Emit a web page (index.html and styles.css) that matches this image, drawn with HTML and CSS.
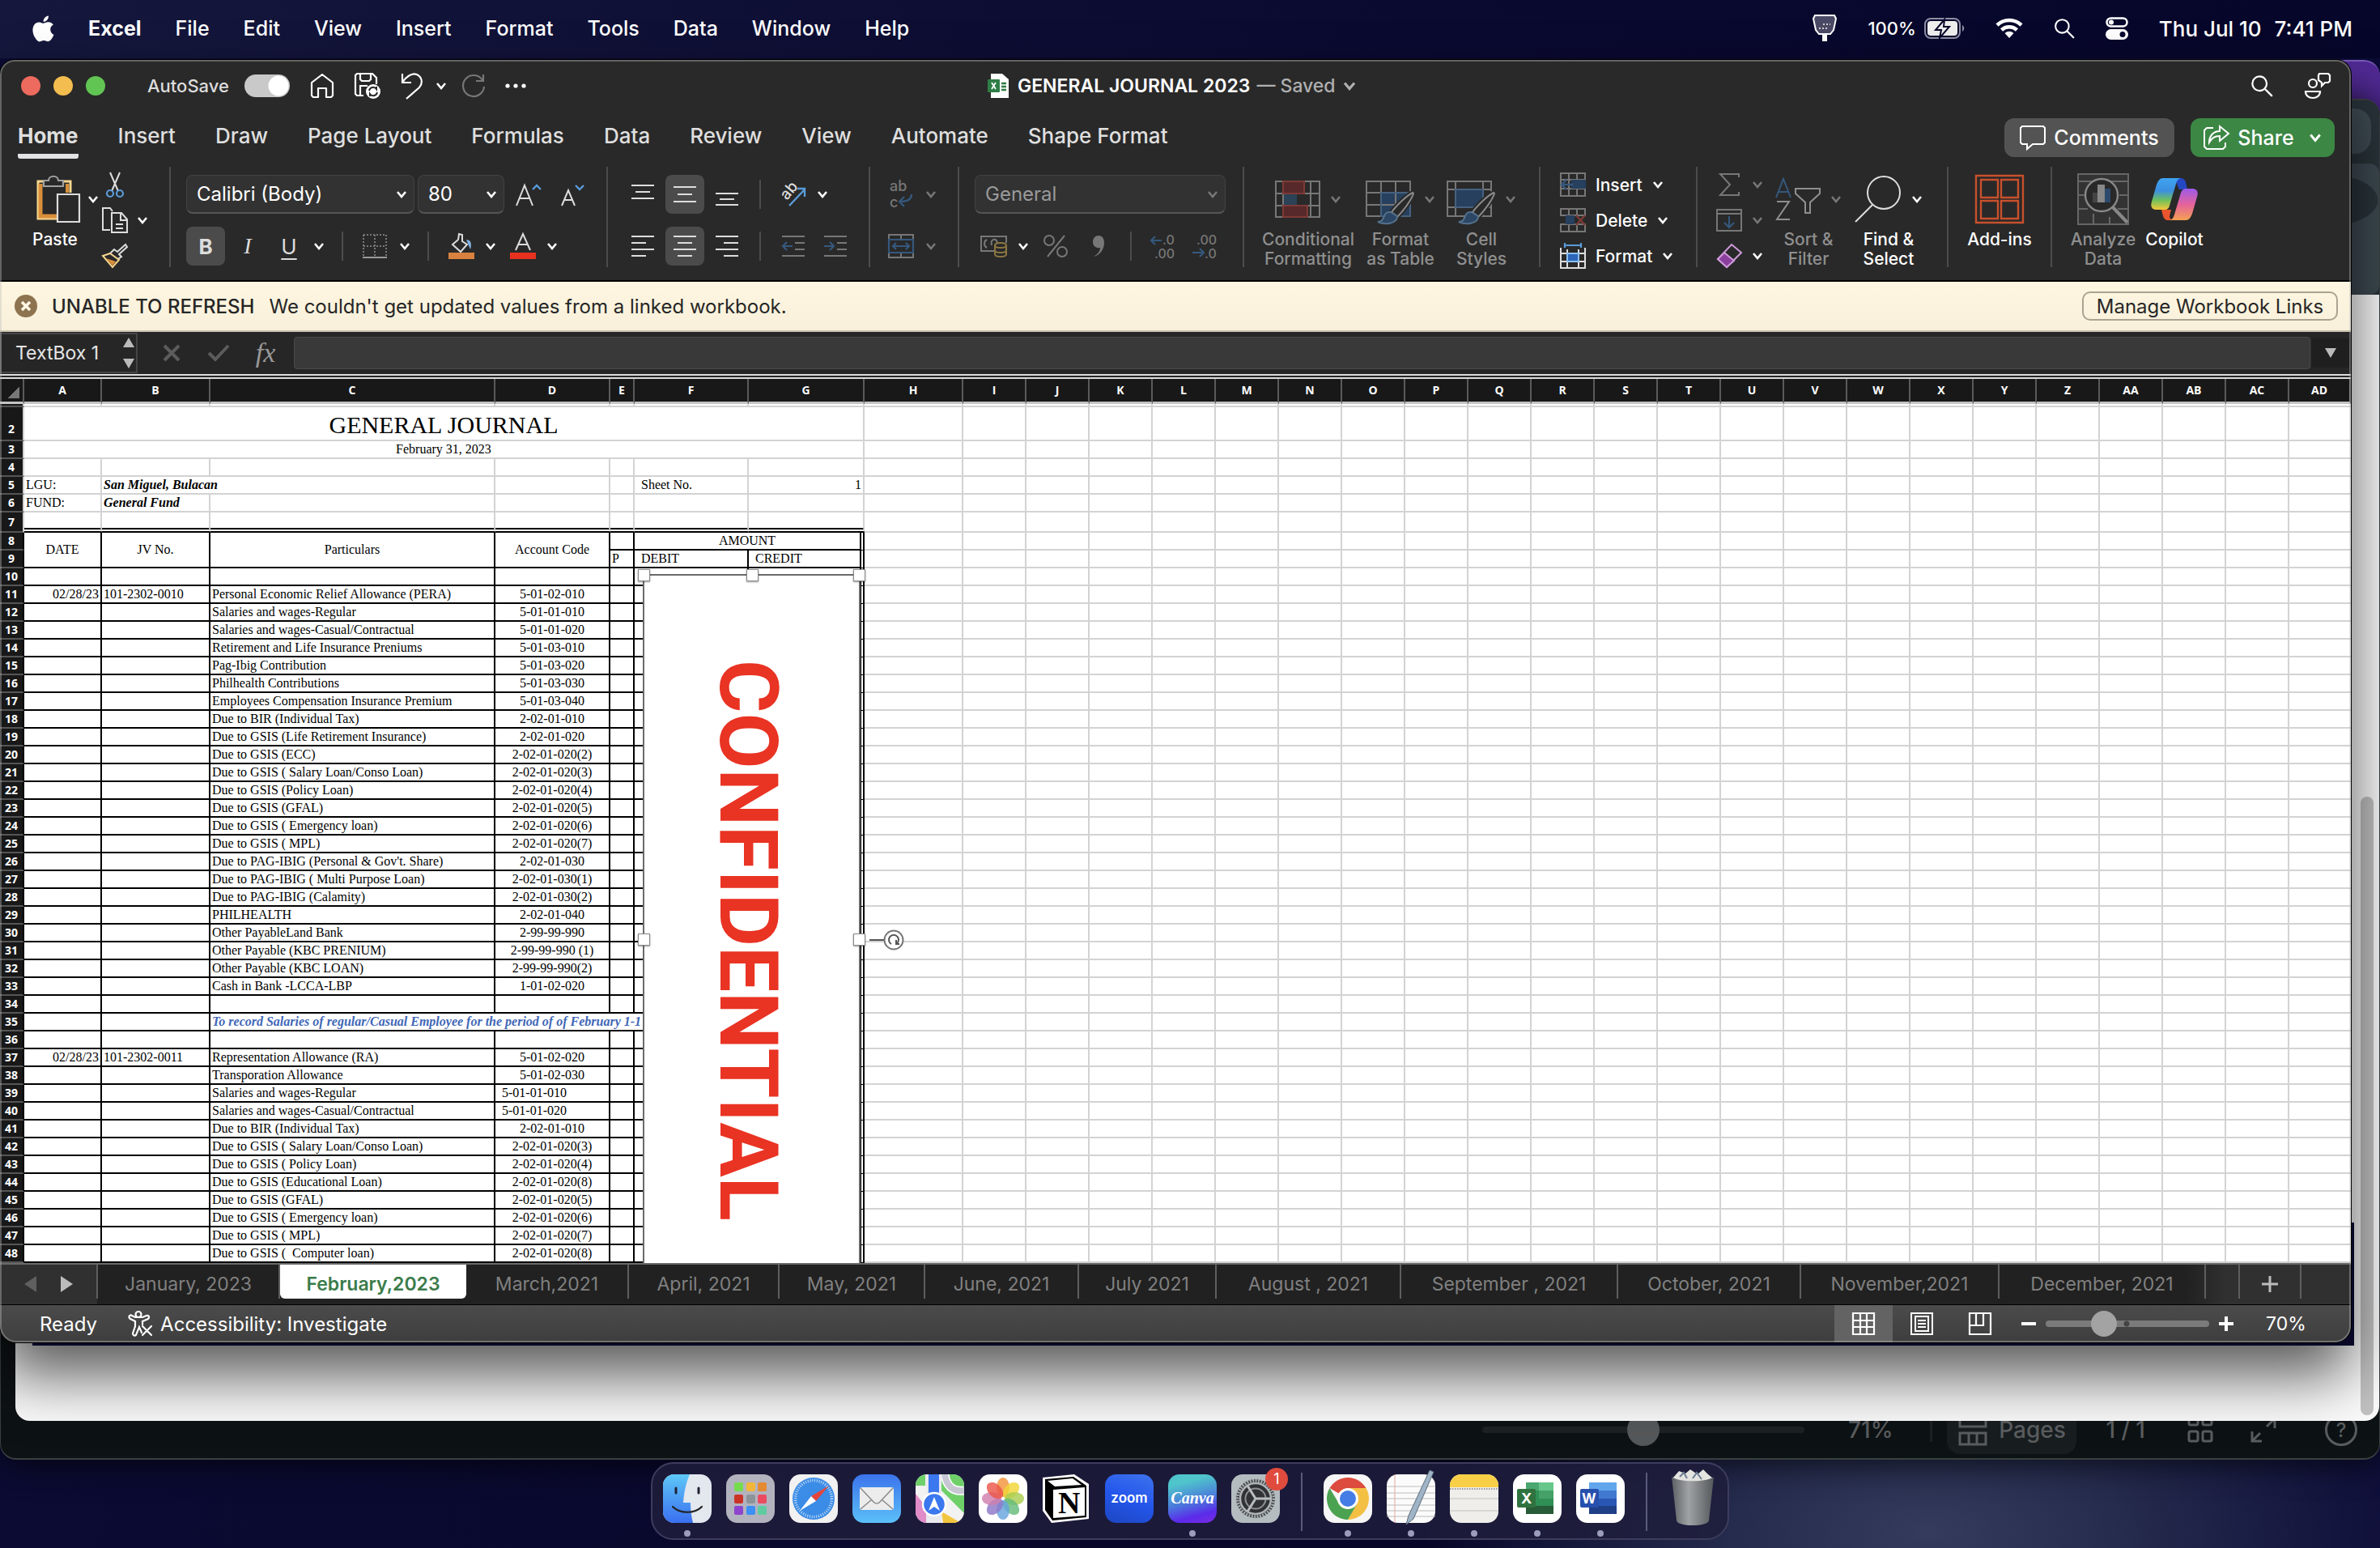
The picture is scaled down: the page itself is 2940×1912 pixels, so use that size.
FILE: index.html
```html
<!DOCTYPE html>
<html lang="en">
<head>
<meta charset="utf-8">
<title>GENERAL JOURNAL 2023</title>
<link rel="stylesheet" href="styles.css">
</head>
<body>
<svg class="defs" aria-hidden="true">
  <symbol id="chev" viewBox="0 0 14 10"><path d="M2 2l5 6 5-6" fill="none" stroke="currentColor" stroke-width="2.6"/></symbol>
  <symbol id="lens" viewBox="0 0 30 30"><circle cx="12" cy="12" r="9.5" fill="none" stroke="currentColor" stroke-width="2.4"/><path d="M19 19l9 9" stroke="currentColor" stroke-width="2.6" stroke-linecap="round"/></symbol>
  <symbol id="al-top" viewBox="0 0 28 28"><path d="M0 3h28M5 11h18M0 19h28" stroke="currentColor" stroke-width="2"/></symbol>
  <symbol id="al-mid" viewBox="0 0 28 28"><path d="M0 5h28M5 14h18M0 23h28" stroke="currentColor" stroke-width="2"/></symbol>
  <symbol id="al-bot" viewBox="0 0 28 28"><path d="M0 13h28M5 20h18M0 27h28" stroke="currentColor" stroke-width="2"/></symbol>
  <symbol id="al-left" viewBox="0 0 28 28"><path d="M0 2h28M0 10h18M0 18h28M0 26h18" stroke="currentColor" stroke-width="2"/></symbol>
  <symbol id="al-center" viewBox="0 0 28 28"><path d="M0 2h28M5 10h18M0 18h28M5 26h18" stroke="currentColor" stroke-width="2"/></symbol>
  <symbol id="al-right" viewBox="0 0 28 28"><path d="M0 2h28M10 10h18M0 18h28M10 26h18" stroke="currentColor" stroke-width="2"/></symbol>
  <symbol id="brush" viewBox="0 0 46 42"><path d="M44 2C36 6 24 18 18 26l7 6C33 24 43 10 45 3z" fill="#292929" stroke="#292929" stroke-width="6"/><path d="M44 2C36 6 24 18 18 26l7 6C33 24 43 10 45 3z" fill="#292929" stroke="#8a8a8a" stroke-width="2"/><path d="M17 26c-8-1-8 6-10 9-1 2-3 3-6 3 8 4 24 3 24-7z" fill="#2c4666" stroke="#54728c" stroke-width="2"/></symbol>
</svg>

<header class="menubar">
  <nav class="menus">
    <svg class="apple" viewBox="0 0 26 32"><path fill="#fff" d="M21.500 17c0-4 3.200-5.600 3.400-5.800-1.900-2.700-4.800-3-5.800-3.100-2.400-.2-4.700 1.400-6 1.400-1.200 0-3.100-1.400-5.100-1.300C5.300 8.200 2.900 9.700 1.600 12c-2.700 4.700-.7 11.700 2 15.500 1.300 1.900 2.800 4 4.900 3.900 2-.1 2.700-1.300 5-1.300s3 1.300 5.100 1.200c2.100 0 3.500-1.900 4.800-3.800 1.500-2.200 2.100-4.300 2.100-4.400-.1 0-4-1.600-4-6.100zM17.600 5.500C18.700 4.200 19.400 2.400 19.200.6c-1.500.1-3.400 1-4.500 2.300-1 1.100-1.900 3-1.600 4.700 1.700.1 3.400-.9 4.500-2.100z"/></svg>
    <a href="#" class="app">Excel</a><a href="#">File</a><a href="#">Edit</a><a href="#">View</a><a href="#">Insert</a><a href="#">Format</a><a href="#">Tools</a><a href="#">Data</a><a href="#">Window</a><a href="#">Help</a>
  </nav>
  <div class="extras">
    <svg width="30" height="34" viewBox="0 0 30 34"><path d="M3 1h24l2 4-3 14-4 5H8l-4-5L1 5z" fill="#4a4a66" stroke="#fff" stroke-width="2"/><path d="M12 24h6v9h-6z" fill="#fff"/><path d="M8 17h12M13 12h9" stroke="#ccc" stroke-width="2" stroke-dasharray="2 2"/></svg>
    <span class="battery"><span>100%</span><svg width="50" height="26" viewBox="0 0 50 26"><rect x="1" y="1" width="43" height="24" rx="7" fill="none" stroke="#8d8da4" stroke-width="2"/><rect x="4" y="4" width="37" height="18" rx="4" fill="#eee"/><path d="M47 9c3 2 3 6 0 8z" fill="#8d8da4"/><path d="M25 2L14 15h7l-2 10 12-14h-7z" fill="#eee" stroke="#07072a" stroke-width="2"/></svg></span>
    <svg width="34" height="26" viewBox="0 0 34 26"><path d="M2 9a22 22 0 0 1 30 0M7.500 15a14 14 0 0 1 19 0" fill="none" stroke="#fff" stroke-width="4.500"/><path d="M17 25l-5.500-6a8 8 0 0 1 11 0z" fill="#fff"/></svg>
    <svg width="26" height="26"><use href="#lens"/></svg>
    <svg width="28" height="28" viewBox="0 0 28 28"><rect x="1.500" y="1.500" width="25" height="10" rx="5" fill="none" stroke="#fff" stroke-width="2.500"/><circle cx="7" cy="6.500" r="3" fill="#fff"/><rect x="0" y="15" width="28" height="13" rx="6.500" fill="#fff"/><circle cx="21" cy="21.500" r="3.500" fill="#0a0a30"/></svg>
    <time class="clock"><span>Thu Jul 10</span><span>7:41 PM</span></time>
  </div>
</header>

<main class="desktop">
  <div class="purple-window"></div>
  <section class="canva">
    <div class="canva-top"><i class="pill"></i><i class="panel"></i></div>
    <div class="canva-page"><i class="scroll"></i></div>
    <footer class="canva-foot">
      <div class="foot-row">
        <div class="track"><i></i></div>
        <span class="pct">71%</span>
        <i class="bar"></i>
        <button class="pages"><svg width="36" height="44" viewBox="0 0 36 44"><path d="M2 2h32v16H2zM2 26h32v14H2zM13 26v14M23 26v14" fill="none" stroke="currentColor" stroke-width="3"/></svg>Pages</button>
        <span class="count">1 / 1</span>
        <svg width="32" height="40" viewBox="0 0 32 40"><g fill="none" stroke="currentColor" stroke-width="3"><rect x="2" y="2" width="11" height="12" rx="2"/><rect x="19" y="2" width="11" height="12" rx="2"/><rect x="2" y="22" width="11" height="12" rx="2"/><rect x="19" y="22" width="11" height="12" rx="2"/></g></svg>
        <svg width="32" height="36" viewBox="0 0 32 36"><path d="M2 20v12h12M2 32l10-10M18 4h12v12M30 4L20 14" fill="none" stroke="currentColor" stroke-width="3"/></svg>
        <span class="help">?</span>
      </div>
    </footer>
  </section>
  <div class="under"></div>

  <section class="excel">
    <div class="titlebar">
      <div class="lights"><i></i><i></i><i></i></div>
      <label class="autosave">AutoSave <input type="checkbox" checked></label>
      <div class="quick">
        <svg width="30" height="32" viewBox="0 0 30 32"><path d="M2 12L15 2l13 10v16l-2 2h-6V19H10v11H4l-2-2z" fill="none" stroke="#fff" stroke-width="2.200" stroke-linejoin="round"/></svg>
        <svg width="34" height="34" viewBox="0 0 34 34"><path d="M12 29H4l-2-2V4l2-2h19l5 5v8M8 2v7l2 2h9l2-2V2M8 29V17h9" fill="none" stroke="#fff" stroke-width="2.200"/><circle cx="24" cy="24" r="9" fill="#fff"/><path d="M19 23a5 5 0 0 1 9-2v-3M29 25a5 5 0 0 1-9 2v3" fill="none" stroke="#292929" stroke-width="2"/></svg>
        <svg width="28" height="34" viewBox="0 0 28 34"><path d="M2 2v11h11M2 13C7 5 14 1 20 3c6 3 8 10 3 16L7 33" fill="none" stroke="#fff" stroke-width="2.200"/></svg>
        <svg class="ch" width="14" height="10"><use href="#chev"/></svg>
        <svg class="dim" width="30" height="32" viewBox="0 0 30 32"><path d="M27 2v8h-9M26 9a13 13 0 1 0 2 8" fill="none" stroke="currentColor" stroke-width="2.200"/></svg>
        <svg width="26" height="6" viewBox="0 0 26 6"><circle cx="3" cy="3" r="2.600" fill="#fff"/><circle cx="13" cy="3" r="2.600" fill="#fff"/><circle cx="23" cy="3" r="2.600" fill="#fff"/></svg>
      </div>
      <h1 class="doc"><svg width="26" height="30" viewBox="0 0 26 30"><path d="M4 0h14l8 7v23H4z" fill="#fff"/><rect x="0" y="7" width="15" height="16" rx="1" fill="#2e7d46"/><path d="M17 12h6M17 16h6M17 20h6" stroke="#2e7d46" stroke-width="2.500"/><path d="M5 11l5 8M10 11l-5 8" stroke="#fff" stroke-width="1.800"/></svg><span>GENERAL JOURNAL 2023</span><em>— Saved</em><svg class="ch" width="18" height="12"><use href="#chev"/></svg></h1>
      <div class="tb-right">
        <svg width="28" height="28" viewBox="0 0 30 30"><use href="#lens"/></svg>
        <svg width="34" height="34" viewBox="0 0 34 34"><g fill="none" stroke="#fff" stroke-width="2.200"><circle cx="11" cy="14" r="5"/><path d="M2 24h18c0 5-4 8-9 8s-9-3-9-8zM19 2h11l2 2v7l-2 2h-4l-4 4v-4l-4-3V4z"/></g></svg>
      </div>
    </div>

    <div class="tabs">
      <nav><a href="#" class="on">Home</a><a href="#">Insert</a><a href="#">Draw</a><a href="#">Page Layout</a><a href="#">Formulas</a><a href="#">Data</a><a href="#">Review</a><a href="#">View</a><a href="#">Automate</a><a href="#">Shape Format</a></nav>
      <button class="comments"><svg width="32" height="30" viewBox="0 0 32 30"><path d="M3 1h26l2 2v18l-2 2H16l-7 6v-6H3l-2-2V3z" fill="none" stroke="#fff" stroke-width="2"/></svg>Comments</button>
      <button class="share"><svg width="32" height="30" viewBox="0 0 32 30"><path d="M12 3H4L1 6v20l3 3h20l3-3v-5M20 7V1l11 9-11 9v-6c-7 0-10 3-13 8 0-8 5-14 13-14z" fill="none" stroke="#fff" stroke-width="2"/></svg>Share<svg class="ch" width="16" height="12"><use href="#chev"/></svg></button>
    </div>

    <div class="ribbon">
      <div class="group clip">
        <button class="big"><span><svg width="54" height="60" viewBox="0 0 54 60"><path d="M10 8H2v46h24M34 8h8v14" fill="none" stroke="#f5d68e" stroke-width="3"/><path d="M5 11v40h20" fill="none" stroke="#d98f3a" stroke-width="5"/><path d="M38 11v11" stroke="#d98f3a" stroke-width="4"/><path d="M9 14V7h6c0-7 12-7 12 0h6v7z" fill="#292929" stroke="#a0a0a0" stroke-width="2.200"/><path d="M26 24h27v34H26z" fill="#292929" stroke="#ddd" stroke-width="2.200"/></svg><svg class="ch" width="14" height="10"><use href="#chev"/></svg></span>Paste</button>
        <div class="small3">
          <button><svg width="22" height="32" viewBox="0 0 22 32"><path d="M5 1l10 23M17 1L7 24" stroke="#ddd" stroke-width="2"/><circle cx="5" cy="27" r="4" fill="none" stroke="#5a9bd8" stroke-width="2.200"/><circle cx="17" cy="27" r="4" fill="none" stroke="#5a9bd8" stroke-width="2.200"/></svg></button><i></i>
          <button><svg width="32" height="32" viewBox="0 0 32 32"><path d="M10 28H1V1h9l3 4" fill="none" stroke="#ddd" stroke-width="2"/><path d="M12 7h12l7 8v16H12zM23 7v9h8M17 21h9M17 26h9" fill="none" stroke="#ddd" stroke-width="2"/></svg></button><svg class="ch" width="14" height="10"><use href="#chev"/></svg>
          <button><svg width="32" height="30" viewBox="0 0 32 30"><path d="M29 1l2 3-10 9 3 3-6 4-8-8 5-5 4 3z" fill="none" stroke="#ddd" stroke-width="2"/><path d="M10 12L1 15l12 14 8-9z" fill="#292929" stroke="#f5d68e" stroke-width="2"/><path d="M5 18l8 9 4-5z" fill="#d98f3a"/></svg></button><i></i>
        </div>
      </div>

      <div class="group font">
        <div class="row r1">
          <button class="combo">Calibri (Body)<svg class="ch" width="14" height="10"><use href="#chev"/></svg></button>
          <button class="combo size">80<svg class="ch" width="14" height="10"><use href="#chev"/></svg></button>
          <button><svg width="32" height="30" viewBox="0 0 32 30"><path d="M1 29L11 4l10 25M5 20h12" fill="none" stroke="#ddd" stroke-width="2"/><path d="M21 9l5-5 5 5" fill="none" stroke="#5a9bd8" stroke-width="2.400"/></svg></button>
          <button><svg width="28" height="30" viewBox="0 0 28 30"><path d="M1 29l8-19 8 19M4 22h10" fill="none" stroke="#ddd" stroke-width="2"/><path d="M18 4l5 5 5-5" fill="none" stroke="#5a9bd8" stroke-width="2.400"/></svg></button>
        </div>
        <div class="row r2">
          <button class="sel"><b>B</b></button><button class="it">I</button><button class="un">U</button><svg class="ch" width="14" height="10"><use href="#chev"/></svg><i class="vs"></i>
          <button class="dim"><svg width="30" height="30" viewBox="0 0 30 30"><path d="M1 1h28M1 15h28M1 1v26M15 1v26M29 1v26" stroke="currentColor" stroke-width="2" stroke-dasharray="2 2"/><path d="M0 29h30" stroke="#999" stroke-width="2"/></svg></button><svg class="ch" width="14" height="10"><use href="#chev"/></svg><i class="vs"></i>
          <button><svg width="32" height="32" viewBox="0 0 32 32"><path d="M12 8L5 14l10 9 8-9-6-4V2l-4-1-1 7" fill="none" stroke="#ddd" stroke-width="2"/><path d="M22 8c6 0 7 5 5 12l-3-7z" fill="#7fb0e2"/><path d="M0 24h32v8H0z" fill="#d9823f"/></svg></button><svg class="ch" width="14" height="10"><use href="#chev"/></svg>
          <button><svg width="32" height="32" viewBox="0 0 32 32"><path d="M7 21L16 1l9 20M10 14h12" fill="none" stroke="#ddd" stroke-width="2"/><path d="M0 24h32v8H0z" fill="#e8321f"/></svg></button><svg class="ch" width="14" height="10"><use href="#chev"/></svg>
        </div>
      </div>

      <div class="group align">
        <div class="row">
          <button><svg width="28" height="28"><use href="#al-top"/></svg></button><button class="sel"><svg width="28" height="28"><use href="#al-mid"/></svg></button><button><svg width="28" height="28"><use href="#al-bot"/></svg></button><i class="vs"></i>
          <button><svg width="32" height="32" viewBox="0 0 32 32"><text x="0" y="0" transform="translate(8 24) rotate(-50)" font-size="19" fill="#ddd">ab</text><path d="M11 30L30 10M21 9h9v10" fill="none" stroke="#5a9bd8" stroke-width="2.400"/></svg></button><svg class="ch" width="14" height="10"><use href="#chev"/></svg>
        </div>
        <div class="row r2">
          <button><svg width="28" height="28"><use href="#al-left"/></svg></button><button class="sel"><svg width="28" height="28"><use href="#al-center"/></svg></button><button><svg width="28" height="28"><use href="#al-right"/></svg></button><i class="vs"></i>
          <button class="dim"><svg width="28" height="28" viewBox="0 0 28 28"><path d="M0 2h28M16 10h12M16 18h12M0 26h28" stroke="currentColor" stroke-width="2"/><path d="M1 14h12M6 9l-5 5 5 5" fill="none" stroke="#35587d" stroke-width="2.200"/></svg></button>
          <button class="dim"><svg width="28" height="28" viewBox="0 0 28 28"><path d="M0 2h28M16 10h12M16 18h12M0 26h28" stroke="currentColor" stroke-width="2"/><path d="M0 14h12M7 9l5 5-5 5" fill="none" stroke="#35587d" stroke-width="2.200"/></svg></button>
        </div>
      </div>

      <div class="group wrap dim">
        <div class="row"><button><svg width="30" height="34" viewBox="0 0 30 34"><text x="1" y="13" font-size="18" fill="currentColor">ab</text><text x="1" y="33" font-size="18" fill="currentColor">c</text><path d="M28 17c0 6-4 9-14 9M19 20l-6 6 6 6" fill="none" stroke="#35587d" stroke-width="2.400"/></svg></button><svg class="ch" width="14" height="10"><use href="#chev"/></svg></div>
        <div class="row"><button><svg width="32" height="30" viewBox="0 0 32 30"><path d="M1 1h30v28H1zM1 7h30M1 23h30M16 1v6M16 23v6" fill="none" stroke="currentColor" stroke-width="2"/><path d="M1 7h30v16H1zM6 15h20M10 11l-4 4 4 4M22 11l4 4-4 4" fill="none" stroke="#35587d" stroke-width="2.200"/></svg></button><svg class="ch" width="14" height="10"><use href="#chev"/></svg></div>
      </div>

      <div class="group number dim">
        <button class="combo">General<svg class="ch" width="14" height="10"><use href="#chev"/></svg></button>
        <div class="row"><button><svg width="34" height="30" viewBox="0 0 34 30"><path d="M18 21H1V3h31v8M8 7c-4 2-4 8 0 10M14 14c-2-8 6-10 7-3" fill="none" stroke="currentColor" stroke-width="2"/><path d="M18 14c0-4 14-4 14 0v11c0 4-14 4-14 0zM18 14c0 4 14 4 14 0M18 20c0 4 14 4 14 0" fill="#292929" stroke="#8d7743" stroke-width="2"/></svg></button><svg class="ch lit" width="14" height="10"><use href="#chev"/></svg>
          <button><svg width="32" height="30" viewBox="0 0 32 30"><g fill="none" stroke="currentColor" stroke-width="2"><circle cx="8" cy="8" r="6"/><circle cx="24" cy="22" r="6"/><path d="M27 2L6 28"/></g></svg></button>
          <button><svg width="16" height="28" viewBox="0 0 16 28"><path d="M8 1c5 0 7 4 7 9 0 8-5 15-13 17 5-3 8-7 8-11-6 1-9-3-9-7 0-5 3-8 7-8z" fill="currentColor"/></svg></button><i class="vs"></i>
          <button><svg width="32" height="32" viewBox="0 0 32 32"><text x="15" y="14" font-size="16" fill="currentColor">.0</text><text x="5" y="31" font-size="16" fill="currentColor">.00</text><path d="M1 9h13M6 4L1 9l5 5" fill="none" stroke="#35587d" stroke-width="2.200"/></svg></button>
          <button><svg width="32" height="32" viewBox="0 0 32 32"><text x="5" y="14" font-size="16" fill="currentColor">.00</text><text x="15" y="31" font-size="16" fill="currentColor">.0</text><path d="M0 24h14M9 19l5 5-5 5" fill="none" stroke="#35587d" stroke-width="2.200"/></svg></button>
        </div>
      </div>

      <div class="group styles dim">
        <button class="big"><span><svg width="56" height="46" viewBox="0 0 56 46"><path d="M10 1h26v15H10zM10 31h30v14H10z" fill="#57292a"/><path d="M10 16h17v15H10z" fill="#2b4257"/><path d="M1 1h54v44H1zM1 16h54M1 31h54M10 1v44M44 1v44" fill="none" stroke="#777" stroke-width="2"/><path d="M10 1h26v15H10zM10 31h30v14H10z" fill="none" stroke="#7e3a36" stroke-width="2"/></svg><svg class="ch" width="14" height="10"><use href="#chev"/></svg></span>Conditional<br>Formatting</button>
        <button class="big"><span><svg width="60" height="56" viewBox="0 0 60 56"><path d="M19 20h37v29H19z" fill="#27405e"/><path d="M1 6h54v43H1zM1 20h54M1 35h54M19 6v43M37 6v43" fill="none" stroke="#777" stroke-width="2"/><path d="M19 20h36v29H19z" fill="none" stroke="#46617f" stroke-width="2"/><use href="#brush" x="14" y="18" width="46" height="42"/></svg><svg class="ch" width="14" height="10"><use href="#chev"/></svg></span>Format<br>as Table</button>
        <button class="big"><span><svg width="60" height="56" viewBox="0 0 60 56"><path d="M1 6h54v43H1zM1 16h54M1 38h54M11 6v43M45 6v43" fill="none" stroke="#777" stroke-width="2"/><path d="M11 16h34v22H11z" fill="#27405e" stroke="#46617f" stroke-width="2"/><use href="#brush" x="14" y="18" width="46" height="42"/></svg><svg class="ch" width="14" height="10"><use href="#chev"/></svg></span>Cell<br>Styles</button>
      </div>

      <div class="group cells">
        <button><svg width="32" height="30" viewBox="0 0 32 30"><path d="M1 1h30v28H1zM1 9h30M1 20h30M11 1v28M21 1v28" fill="none" stroke="#777" stroke-width="2"/><path d="M14 9h18v11H14z" fill="#27405e"/><path d="M2 15h14M8 9l-6 6 6 6" fill="none" stroke="#35587d" stroke-width="2.400"/></svg>Insert<svg class="ch" width="14" height="10"><use href="#chev"/></svg></button>
        <button><svg width="32" height="30" viewBox="0 0 32 30"><path d="M1 1h30v8H1zM1 20h30v9H1zM11 1v28M21 1v8M21 20v9" fill="none" stroke="#777" stroke-width="2"/><path d="M7 9h11v11H7z" fill="#27405e"/><path d="M20 9l11 12M31 9L20 21" stroke="#7e3a36" stroke-width="2.400"/></svg>Delete<svg class="ch" width="14" height="10"><use href="#chev"/></svg></button>
        <button><svg width="32" height="32" viewBox="0 0 32 32"><path d="M6 3h20M6 0v6M26 0v6" stroke="#5a9bd8" stroke-width="2.200"/><path d="M1 6v25h30V6M1 13h30M1 23h30M9 8v23M23 8v23" fill="none" stroke="#ddd" stroke-width="2"/><path d="M9 13h14v10H9z" fill="#2b66b8" stroke="#8cc0f2" stroke-width="2"/></svg>Format<svg class="ch" width="14" height="10"><use href="#chev"/></svg></button>
      </div>

      <div class="group edit">
        <div class="small3 dim">
          <button><svg width="26" height="28" viewBox="0 0 26 28"><path d="M25 5V1H2l12 13L2 27h23v-4" fill="none" stroke="currentColor" stroke-width="2"/></svg></button><svg class="ch" width="14" height="10"><use href="#chev"/></svg>
          <button><svg width="32" height="28" viewBox="0 0 32 28"><path d="M1 1h30v26H1zM1 6h30" fill="none" stroke="currentColor" stroke-width="2"/><path d="M16 9v14M10 17l6 6 6-6" fill="none" stroke="#35587d" stroke-width="2.200"/></svg></button><svg class="ch" width="14" height="10"><use href="#chev"/></svg>
          <button><svg width="32" height="32" viewBox="0 0 32 32"><path d="M19 2l12 10-18 18L2 20z" fill="none" stroke="#cf9bdc" stroke-width="2"/><path d="M10 12l12 10-9 8L2 20z" fill="#8b3f9c" stroke="#cf9bdc" stroke-width="2"/></svg></button><svg class="ch lit" width="14" height="10"><use href="#chev"/></svg>
        </div>
        <button class="big dim"><span><svg width="56" height="54" viewBox="0 0 56 54"><path d="M1 25L10 2l9 23M4 18h12" fill="none" stroke="#35587d" stroke-width="2"/><path d="M2 30h15L2 52h16" fill="none" stroke="currentColor" stroke-width="2"/><path d="M25 14h30v6L43 31v13h-6V31L25 20z" fill="none" stroke="currentColor" stroke-width="2"/></svg><svg class="ch" width="14" height="10"><use href="#chev"/></svg></span>Sort &amp;<br>Filter</button>
        <button class="big"><span><svg width="58" height="58" viewBox="0 0 58 58"><circle cx="36" cy="21" r="20" fill="none" stroke="#ddd" stroke-width="2"/><path d="M22 36L1 57" stroke="#ddd" stroke-width="2"/></svg><svg class="ch" width="14" height="10"><use href="#chev"/></svg></span>Find &amp;<br>Select</button>
      </div>

      <div class="group addins">
        <button class="big"><span><svg width="60" height="60" viewBox="0 0 60 60"><g fill="none" stroke="#c8502d" stroke-width="2.400"><path d="M1 1h58v58H1z"/><path d="M7 6h21v22H7zM32 6h21v22H32zM7 32h21v22H7zM32 32h21v22H32z"/></g></svg></span>Add-ins</button>
      </div>

      <div class="group ai">
        <button class="big dim"><span><svg width="64" height="64" viewBox="0 0 64 64"><path d="M1 1h62v62H1zM1 10h62M1 27h12M1 44h12M52 27h11M50 44h13M20 50v13M40 54v9" fill="#333" stroke="#666" stroke-width="2"/><circle cx="30" cy="27" r="20" fill="#292929" stroke="#888" stroke-width="2.400"/><path d="M19 24h7v12h-7z" fill="#444"/><path d="M25 14h9v22h-9z" fill="#888"/><path d="M34 19h7v17h-7z" fill="#2c4a6c"/><path d="M44 42l18 19" stroke="#888" stroke-width="4"/></svg></span>Analyze<br>Data</button>
        <button class="big"><span><svg width="60" height="54" viewBox="0 0 60 54"><defs><linearGradient id="cp1" x1="0" y1="0" x2="0" y2="1"><stop offset="0" stop-color="#3fa4f0"/><stop offset=".4" stop-color="#3c8fe0"/><stop offset=".7" stop-color="#6fc05c"/><stop offset="1" stop-color="#f3c73a"/></linearGradient><linearGradient id="cp2" x1="0" y1="0" x2="0" y2="1"><stop offset="0" stop-color="#9c5ae8"/><stop offset=".5" stop-color="#e5639b"/><stop offset="1" stop-color="#f4a052"/></linearGradient></defs><path d="M30 1h8c3 0 5 2 6 5l2 9h-10z" fill="#2447c4"/><path d="M16 1h22c-4 1-5 4-6 7l-8 27c-1 4-3 5-6 5H8c-6 0-8-4-6-10L8 9c2-5 4-8 8-8z" fill="url(#cp1)"/><path d="M14 40h12l-2 8c0 3 3 5 6 5h-8c-3 0-5-2-6-5z" fill="#e8552f"/><path d="M44 53H24c4-1 5-4 6-7l8-27c1-3 3-5 6-5h8c6 0 8 4 6 10l-6 21c-2 5-4 8-8 8z" fill="url(#cp2)"/></svg></span>Copilot</button>
      </div>
    </div>

    <div class="message">
      <svg width="28" height="28" viewBox="0 0 28 28"><circle cx="14" cy="14" r="14" fill="#8e7350"/><path d="M9 9l10 10M19 9L9 19" stroke="#fff8e6" stroke-width="3.500"/></svg>
      <strong>UNABLE TO REFRESH</strong><span>We couldn't get updated values from a linked workbook.</span>
      <button>Manage Workbook Links</button>
    </div>

    <div class="formula">
      <div class="namebox"><input value="TextBox 1" aria-label="Name box"><svg width="14" height="38" viewBox="0 0 14 38"><path d="M7 0l7 12H0zM7 38l7-12H0z" fill="#bbb"/></svg></div>
      <button><svg width="22" height="20" viewBox="0 0 22 20"><path d="M2 1l18 18M20 1L2 19" stroke="#5c5c5c" stroke-width="4"/></svg></button>
      <button><svg width="28" height="22" viewBox="0 0 28 22"><path d="M2 11l8 8L26 2" fill="none" stroke="#5c5c5c" stroke-width="4"/></svg></button>
      <button class="fx">fx</button>
      <input class="fin" aria-label="Formula">
      <button class="expand"><svg width="14" height="12" viewBox="0 0 14 12"><path d="M0 0h14L7 12z" fill="#bbb"/></svg></button>
    </div>

    <div class="sheet">
      <table>
        <colgroup><col class="w30"><col class="w96"><col class="w134"><col class="w352"><col class="w142"><col class="w30"><col class="w141"><col class="w143"><col class="w122"><col class="w78" span="21"><col></colgroup>
        <thead><tr><th class="corner"></th><th>A</th><th>B</th><th>C</th><th>D</th><th>E</th><th>F</th><th>G</th><th>H</th><th>I</th><th>J</th><th>K</th><th>L</th><th>M</th><th>N</th><th>O</th><th>P</th><th>Q</th><th>R</th><th>S</th><th>T</th><th>U</th><th>V</th><th>W</th><th>X</th><th>Y</th><th>Z</th><th>AA</th><th>AB</th><th>AC</th><th>AD</th></tr></thead>
        <tbody class="plain">
          <tr class="sliver"><th></th><td></td><td></td><td></td><td></td><td></td><td></td><td></td><td></td><td class="rest" colspan="22"></td></tr>
          <tr class="head"><th>2</th><td colspan="7">GENERAL JOURNAL</td><td></td><td class="rest" colspan="22"></td></tr>
          <tr><th>3</th><td colspan="7" class="c">February 31, 2023</td><td></td><td class="rest" colspan="22"></td></tr>
          <tr><th>4</th><td></td><td></td><td></td><td></td><td></td><td></td><td></td><td></td><td class="rest" colspan="22"></td></tr>
          <tr><th>5</th><td>LGU:</td><td colspan="2" class="bi">San Miguel, Bulacan</td><td></td><td></td><td class="in">Sheet No.</td><td class="r">1</td><td></td><td class="rest" colspan="22"></td></tr>
          <tr><th>6</th><td>FUND:</td><td class="bi">General Fund</td><td></td><td></td><td></td><td></td><td></td><td></td><td class="rest" colspan="22"></td></tr>
          <tr class="seven"><th>7</th><td></td><td></td><td></td><td></td><td></td><td></td><td></td><td></td><td class="rest" colspan="22"></td></tr>
        </tbody>
        <tbody class="ledger">
          <tr><th>8</th><td rowspan="2" class="c">DATE</td><td rowspan="2" class="c">JV No.</td><td rowspan="2" class="c">Particulars</td><td rowspan="2" class="c">Account Code</td><td></td><td colspan="2" class="c g">AMOUNT</td><td></td><td class="rest" colspan="22"></td></tr>
          <tr><th>9</th><td>P</td><td class="in">DEBIT</td><td class="in g">CREDIT</td><td></td><td class="rest" colspan="22"></td></tr>
          <tr><th>10</th><td></td><td></td><td></td><td></td><td></td><td></td><td class="g"></td><td></td><td class="rest" colspan="22"></td></tr>
          <tr><th>11</th><td class="r">02/28/23</td><td>101-2302-0010</td><td>Personal Economic Relief Allowance (PERA)</td><td class="c">5-01-02-010</td><td></td><td></td><td class="g"></td><td></td><td class="rest" colspan="22"></td></tr>
          <tr><th>12</th><td></td><td></td><td>Salaries and wages-Regular</td><td class="c">5-01-01-010</td><td></td><td></td><td class="g"></td><td></td><td class="rest" colspan="22"></td></tr>
          <tr><th>13</th><td></td><td></td><td>Salaries and wages-Casual/Contractual</td><td class="c">5-01-01-020</td><td></td><td></td><td class="g"></td><td></td><td class="rest" colspan="22"></td></tr>
          <tr><th>14</th><td></td><td></td><td>Retirement and Life Insurance Preniums</td><td class="c">5-01-03-010</td><td></td><td></td><td class="g"></td><td></td><td class="rest" colspan="22"></td></tr>
          <tr><th>15</th><td></td><td></td><td>Pag-Ibig Contribution</td><td class="c">5-01-03-020</td><td></td><td></td><td class="g"></td><td></td><td class="rest" colspan="22"></td></tr>
          <tr><th>16</th><td></td><td></td><td>Philhealth Contributions</td><td class="c">5-01-03-030</td><td></td><td></td><td class="g"></td><td></td><td class="rest" colspan="22"></td></tr>
          <tr><th>17</th><td></td><td></td><td>Employees Compensation Insurance Premium</td><td class="c">5-01-03-040</td><td></td><td></td><td class="g"></td><td></td><td class="rest" colspan="22"></td></tr>
          <tr><th>18</th><td></td><td></td><td>Due to BIR (Individual Tax)</td><td class="c">2-02-01-010</td><td></td><td></td><td class="g"></td><td></td><td class="rest" colspan="22"></td></tr>
          <tr><th>19</th><td></td><td></td><td>Due to GSIS (Life Retirement Insurance)</td><td class="c">2-02-01-020</td><td></td><td></td><td class="g"></td><td></td><td class="rest" colspan="22"></td></tr>
          <tr><th>20</th><td></td><td></td><td>Due to GSIS (ECC)</td><td class="c">2-02-01-020(2)</td><td></td><td></td><td class="g"></td><td></td><td class="rest" colspan="22"></td></tr>
          <tr><th>21</th><td></td><td></td><td>Due to GSIS ( Salary Loan/Conso Loan)</td><td class="c">2-02-01-020(3)</td><td></td><td></td><td class="g"></td><td></td><td class="rest" colspan="22"></td></tr>
          <tr><th>22</th><td></td><td></td><td>Due to GSIS (Policy Loan)</td><td class="c">2-02-01-020(4)</td><td></td><td></td><td class="g"></td><td></td><td class="rest" colspan="22"></td></tr>
          <tr><th>23</th><td></td><td></td><td>Due to GSIS (GFAL)</td><td class="c">2-02-01-020(5)</td><td></td><td></td><td class="g"></td><td></td><td class="rest" colspan="22"></td></tr>
          <tr><th>24</th><td></td><td></td><td>Due to GSIS ( Emergency loan)</td><td class="c">2-02-01-020(6)</td><td></td><td></td><td class="g"></td><td></td><td class="rest" colspan="22"></td></tr>
          <tr><th>25</th><td></td><td></td><td>Due to GSIS ( MPL)</td><td class="c">2-02-01-020(7)</td><td></td><td></td><td class="g"></td><td></td><td class="rest" colspan="22"></td></tr>
          <tr><th>26</th><td></td><td></td><td>Due to PAG-IBIG (Personal &amp; Gov't. Share)</td><td class="c">2-02-01-030</td><td></td><td></td><td class="g"></td><td></td><td class="rest" colspan="22"></td></tr>
          <tr><th>27</th><td></td><td></td><td>Due to PAG-IBIG ( Multi Purpose Loan)</td><td class="c">2-02-01-030(1)</td><td></td><td></td><td class="g"></td><td></td><td class="rest" colspan="22"></td></tr>
          <tr><th>28</th><td></td><td></td><td>Due to PAG-IBIG (Calamity)</td><td class="c">2-02-01-030(2)</td><td></td><td></td><td class="g"></td><td></td><td class="rest" colspan="22"></td></tr>
          <tr><th>29</th><td></td><td></td><td>PHILHEALTH</td><td class="c">2-02-01-040</td><td></td><td></td><td class="g"></td><td></td><td class="rest" colspan="22"></td></tr>
          <tr><th>30</th><td></td><td></td><td>Other PayableLand Bank</td><td class="c">2-99-99-990</td><td></td><td></td><td class="g"></td><td></td><td class="rest" colspan="22"></td></tr>
          <tr><th>31</th><td></td><td></td><td>Other Payable (KBC PRENIUM)</td><td class="c">2-99-99-990 (1)</td><td></td><td></td><td class="g"></td><td></td><td class="rest" colspan="22"></td></tr>
          <tr><th>32</th><td></td><td></td><td>Other Payable (KBC LOAN)</td><td class="c">2-99-99-990(2)</td><td></td><td></td><td class="g"></td><td></td><td class="rest" colspan="22"></td></tr>
          <tr><th>33</th><td></td><td></td><td>Cash in Bank -LCCA-LBP</td><td class="c">1-01-02-020</td><td></td><td></td><td class="g"></td><td></td><td class="rest" colspan="22"></td></tr>
          <tr><th>34</th><td></td><td></td><td></td><td></td><td></td><td></td><td class="g"></td><td></td><td class="rest" colspan="22"></td></tr>
          <tr><th>35</th><td></td><td></td><td colspan="4" class="note">To record Salaries of regular/Casual Employee for the period of of February 1-1</td><td class="g"></td><td></td><td class="rest" colspan="22"></td></tr>
          <tr><th>36</th><td></td><td></td><td></td><td></td><td></td><td></td><td class="g"></td><td></td><td class="rest" colspan="22"></td></tr>
          <tr><th>37</th><td class="r">02/28/23</td><td>101-2302-0011</td><td>Representation Allowance (RA)</td><td class="c">5-01-02-020</td><td></td><td></td><td class="g"></td><td></td><td class="rest" colspan="22"></td></tr>
          <tr><th>38</th><td></td><td></td><td>Transporation Allowance</td><td class="c">5-01-02-030</td><td></td><td></td><td class="g"></td><td></td><td class="rest" colspan="22"></td></tr>
          <tr><th>39</th><td></td><td></td><td>Salaries and wages-Regular</td><td class="in">5-01-01-010</td><td></td><td></td><td class="g"></td><td></td><td class="rest" colspan="22"></td></tr>
          <tr><th>40</th><td></td><td></td><td>Salaries and wages-Casual/Contractual</td><td class="in">5-01-01-020</td><td></td><td></td><td class="g"></td><td></td><td class="rest" colspan="22"></td></tr>
          <tr><th>41</th><td></td><td></td><td>Due to BIR (Individual Tax)</td><td class="c">2-02-01-010</td><td></td><td></td><td class="g"></td><td></td><td class="rest" colspan="22"></td></tr>
          <tr><th>42</th><td></td><td></td><td>Due to GSIS ( Salary Loan/Conso Loan)</td><td class="c">2-02-01-020(3)</td><td></td><td></td><td class="g"></td><td></td><td class="rest" colspan="22"></td></tr>
          <tr><th>43</th><td></td><td></td><td>Due to GSIS ( Policy Loan)</td><td class="c">2-02-01-020(4)</td><td></td><td></td><td class="g"></td><td></td><td class="rest" colspan="22"></td></tr>
          <tr><th>44</th><td></td><td></td><td>Due to GSIS (Educational Loan)</td><td class="c">2-02-01-020(8)</td><td></td><td></td><td class="g"></td><td></td><td class="rest" colspan="22"></td></tr>
          <tr><th>45</th><td></td><td></td><td>Due to GSIS (GFAL)</td><td class="c">2-02-01-020(5)</td><td></td><td></td><td class="g"></td><td></td><td class="rest" colspan="22"></td></tr>
          <tr><th>46</th><td></td><td></td><td>Due to GSIS ( Emergency loan)</td><td class="c">2-02-01-020(6)</td><td></td><td></td><td class="g"></td><td></td><td class="rest" colspan="22"></td></tr>
          <tr><th>47</th><td></td><td></td><td>Due to GSIS ( MPL)</td><td class="c">2-02-01-020(7)</td><td></td><td></td><td class="g"></td><td></td><td class="rest" colspan="22"></td></tr>
          <tr><th>48</th><td></td><td></td><td>Due to GSIS (&nbsp; Computer loan)</td><td class="c">2-02-01-020(8)</td><td></td><td></td><td class="g"></td><td></td><td class="rest" colspan="22"></td></tr>
        </tbody>
      </table>
      <div class="textbox">
        <span>CONFIDENTIAL</span>
        <i class="h tl"></i><i class="h tc"></i><i class="h tr"></i><i class="h ml"></i><i class="h mr"></i>
        <svg class="rotate" width="44" height="28" viewBox="0 0 44 28"><path d="M0 14h18" stroke="#555" stroke-width="2"/><circle cx="30" cy="14" r="11.500" fill="#fff" stroke="#777" stroke-width="2"/><path d="M27 19a6 6 0 1 1 6 0M33 14v5h4" fill="none" stroke="#555" stroke-width="2"/></svg>
      </div>
    </div>

    <nav class="sheets">
      <span class="arrows"><svg width="62" height="22" viewBox="0 0 62 22"><path d="M16 1v20L1 11z" fill="#5f5f5f"/><path d="M46 1v20l15-10z" fill="#bbb"/></svg></span>
      <button>January, 2023</button><button class="on">February,2023</button><button>March,2021</button><button>April, 2021</button><button>May, 2021</button><button>June, 2021</button><button>July 2021</button><button>August , 2021</button><button>September , 2021</button><button>October, 2021</button><button>November,2021</button><button>December, 2021</button>
      <span class="fade"></span>
      <button class="add" aria-label="Add sheet"><svg width="20" height="20" viewBox="0 0 20 20"><path d="M10 0v20M0 10h20" stroke="#bbb" stroke-width="3"/></svg></button>
    </nav>

    <footer class="status">
      <span class="ready">Ready</span>
      <svg width="32" height="32" viewBox="0 0 32 32"><g fill="none" stroke="#fff" stroke-width="2.200" stroke-linecap="round"><circle cx="13" cy="4.500" r="3.500"/><path d="M17 27l-3-7-4 10c-1 1-4 1-4-2l3-9v-6L3 10C0 8 2 4 5 6l4 2h9l5-2c3-1 4 2 2 4l-7 3v4M18 19l11 11M29 19L18 30"/></g></svg>
      <span>Accessibility: Investigate</span>
      <div class="views">
        <button class="on" aria-label="Normal view"><svg width="28" height="28" viewBox="0 0 28 28"><path d="M1 1h26v26H1zM1 10h26M1 18h26M10 1v26M18 1v26" fill="none" stroke="#fff" stroke-width="2.200"/></svg></button>
        <button aria-label="Page layout view"><svg width="28" height="28" viewBox="0 0 28 28"><path d="M1 1h26v26H1zM6 5h16v18H6zM9 10h10M9 14h10M9 18h10" fill="none" stroke="#fff" stroke-width="2"/></svg></button>
        <button aria-label="Page break preview"><svg width="28" height="28" viewBox="0 0 28 28"><path d="M1 1h26v26H1zM9 1v15M18 1v15H1" fill="none" stroke="#fff" stroke-width="2.200"/></svg></button>
      </div>
      <div class="zoom">
        <svg width="18" height="20" viewBox="0 0 18 20"><path d="M0 10h18" stroke="#fff" stroke-width="4"/></svg>
        <input type="range" min="0" max="100" value="33" aria-label="Zoom">
        <svg width="18" height="20" viewBox="0 0 18 20"><path d="M0 10h18M9 1v18" stroke="#fff" stroke-width="4"/></svg>
      </div>
      <span class="zp">70%</span>
    </footer>
  </section>

  <nav class="dock">
    <a href="#" class="run" aria-label="Finder"><svg viewBox="0 0 60 60"><defs><linearGradient id="fi" x1="0" y1="0" x2="0" y2="1"><stop offset="0" stop-color="#5ec8f8"/><stop offset="1" stop-color="#3a6ff0"/></linearGradient></defs><rect width="60" height="60" rx="14" fill="#e3e7ee"/><path d="M14 0h19c-5 12-7 22-8 35h9c0 9 1 17 3 25H14A14 14 0 0 1 0 46V14A14 14 0 0 1 14 0z" fill="url(#fi)"/><path d="M16 17v6M44 17v6" stroke="#223" stroke-width="3" stroke-linecap="round"/><path d="M12 40c9 9 27 9 36 0" fill="none" stroke="#222" stroke-width="2.200" stroke-linecap="round"/></svg></a>
    <a href="#" aria-label="Launchpad"><svg viewBox="0 0 60 60"><rect width="60" height="60" rx="14" fill="#b3b3bf"/><rect x="10" y="10" width="11" height="11" rx="2" fill="#76dc4e"/><rect x="25" y="10" width="11" height="11" rx="2" fill="#f2b73a"/><rect x="39" y="10" width="11" height="11" rx="2" fill="#e48a33"/><rect x="10" y="25" width="11" height="11" rx="2" fill="#cc3327"/><rect x="25" y="25" width="11" height="11" rx="2" fill="#8d9499"/><rect x="39" y="25" width="11" height="11" rx="2" fill="#ea4b60"/><rect x="10" y="39" width="11" height="11" rx="2" fill="#8e44cc"/><rect x="25" y="39" width="11" height="11" rx="2" fill="#3d90f2"/><rect x="39" y="39" width="11" height="11" rx="2" fill="#5fcba0"/></svg></a>
    <a href="#" aria-label="Safari"><svg viewBox="0 0 60 60"><rect width="60" height="60" rx="14" fill="#f1f1f1"/><circle cx="30" cy="30" r="26" fill="#3b8ce6"/><circle cx="30" cy="30" r="22.500" fill="none" stroke="#fff" stroke-opacity=".7" stroke-width="3.500" stroke-dasharray="1 1.800"/><path d="M49 14L33 33l-6-6z" fill="#e5443b"/><path d="M13 45l14-18 6 6z" fill="#fff"/></svg></a>
    <a href="#" aria-label="Mail"><svg viewBox="0 0 60 60"><defs><linearGradient id="ml" x1="0" y1="0" x2="0" y2="1"><stop offset="0" stop-color="#3b73ec"/><stop offset="1" stop-color="#5cc0f8"/></linearGradient></defs><rect width="60" height="60" rx="14" fill="url(#ml)"/><rect x="9" y="16" width="42" height="28" rx="3" fill="#ececec"/><path d="M10 17l16 17c3 3 5 3 8 0l16-17M10 43l14-12M50 43L36 31" fill="none" stroke="#8a8a8a" stroke-width="1.500"/></svg></a>
    <a href="#" aria-label="Maps"><svg viewBox="0 0 60 60"><defs><clipPath id="mc"><rect width="60" height="60" rx="14"/></clipPath></defs><g clip-path="url(#mc)"><path d="M0 0h60v60H0z" fill="#f2f2f2"/><path d="M32 0h28v48L32 20zM0 0h12v14H0z" fill="#6fd06a"/><path d="M0 24l16 20v16H0z" fill="#e08cc8"/><path d="M34 60l-2-14 24 14z" fill="#f2c53f"/><path d="M36 0c2 14 10 22 24 20" fill="none" stroke="#fff" stroke-width="11"/><path d="M36 0c2 14 10 22 24 20" fill="none" stroke="#c7c7d4" stroke-width="8"/><path d="M13 0h19v60H13z" fill="#e9e9ef"/><path d="M16 0h13v30H16z" fill="#3b77ee"/><circle cx="23" cy="37" r="14" fill="#3b77ee" stroke="#fff" stroke-width="2.500"/><path d="M23 28l7 17-7-5-7 5z" fill="#fff"/></g></svg></a>
    <a href="#" aria-label="Photos"><svg viewBox="0 0 60 60"><rect width="60" height="60" rx="14" fill="#fff"/><g fill-opacity=".82"><ellipse cx="30" cy="16" rx="8" ry="12" fill="#f3953a"/><ellipse cx="30" cy="16" rx="8" ry="12" fill="#f0d536" transform="rotate(45 30 30)"/><ellipse cx="30" cy="16" rx="8" ry="12" fill="#a9cd52" transform="rotate(90 30 30)"/><ellipse cx="30" cy="16" rx="8" ry="12" fill="#65bb7a" transform="rotate(135 30 30)"/><ellipse cx="30" cy="16" rx="8" ry="12" fill="#66a5de" transform="rotate(180 30 30)"/><ellipse cx="30" cy="16" rx="8" ry="12" fill="#8c78c8" transform="rotate(225 30 30)"/><ellipse cx="30" cy="16" rx="8" ry="12" fill="#cf7fae" transform="rotate(270 30 30)"/><ellipse cx="30" cy="16" rx="8" ry="12" fill="#ec5749" transform="rotate(315 30 30)"/></g></svg></a>
    <a href="#" aria-label="Notion"><svg viewBox="0 0 60 60"><path d="M1 4L40 0l18 12v43L12 60 1 45z" fill="#fff"/><path d="M4 6l35-3 16 11v39l-42 4L4 44z" fill="#000"/><path d="M7 8l31-3 11 8-33 2z" fill="#fff"/><path d="M14 19l39-3v35l-39 3z" fill="#fff"/><text x="20" y="48" font-family="Liberation Serif, serif" font-weight="700" font-size="38" fill="#000">N</text></svg></a>
    <a href="#" class="zoomapp">zoom</a>
    <a href="#" class="canvaapp run">Canva</a>
    <a href="#" aria-label="Settings"><svg viewBox="0 0 60 60"><rect width="60" height="60" rx="14" fill="#b4bcc0"/><circle cx="30" cy="30" r="24" fill="#3c3f42"/><circle cx="30" cy="30" r="22.500" fill="none" stroke="#a8adb0" stroke-width="4" stroke-dasharray="2 1.500"/><circle cx="30" cy="30" r="19" fill="#303235" stroke="#b0b5b8" stroke-width="2.500"/><circle cx="30" cy="30" r="12.500" fill="none" stroke="#8d9194" stroke-width="2"/><path d="M30 30h19M30 30l-10 16M30 30L20 14" stroke="#b8bdc0" stroke-width="3"/></svg><b class="badge">1</b></a>
    <i class="dsep"></i>
    <a href="#" class="run" aria-label="Chrome"><svg viewBox="0 0 60 60"><rect width="60" height="60" rx="14" fill="#f6f6f6"/><path d="M30 30L7.500 17a26 26 0 0 1 45 0z" fill="#dc4b3e"/><path d="M30 17h22.500a26 26 0 0 1-22.500 39l11-20z" fill="#f4c044"/><path d="M7.500 17a26 26 0 0 0 22.500 39l11-19-22-1z" fill="#4ba251"/><circle cx="30" cy="30" r="13" fill="#fff"/><circle cx="30" cy="30" r="10" fill="#447de6"/></svg></a>
    <a href="#" class="run" aria-label="TextEdit"><svg viewBox="0 0 60 60"><rect width="60" height="60" rx="14" fill="#fbfbfb"/><path d="M0 15h60M0 23h60M0 30h60M0 38h60M0 45h60M0 52h60" stroke="#bcbcbc" stroke-width="1.200"/><path d="M10 0v60" stroke="#e6a9a0"/><path d="M53-5l5 2-25 58-9 7 3-11z" fill="#9fb4c6" stroke="#5d6c7a"/></svg></a>
    <a href="#" class="run" aria-label="Notes"><svg viewBox="0 0 60 60"><rect width="60" height="60" rx="14" fill="#efeeeb"/><path d="M14 0h32a14 14 0 0 1 14 14v2H0v-2A14 14 0 0 1 14 0z" fill="#f8cf47"/><path d="M0 18h60" stroke="#999" stroke-dasharray="1.500 1.500" stroke-width="2"/><path d="M0 30h60M0 45h60" stroke="#d2d0cc" stroke-width="1.500"/></svg></a>
    <a href="#" class="run" aria-label="Excel"><svg viewBox="0 0 60 60"><rect width="60" height="60" rx="14" fill="#fff"/><path d="M16 10h34v39H16z" fill="#2f8f55"/><path d="M32 10h18v10H32z" fill="#67c78b"/><path d="M16 10h16v10H16z" fill="#4aa770"/><path d="M32 20h18v10H32z" fill="#45a167"/><path d="M16 39h34v10H16z" fill="#285b38"/><rect x="5" y="18" width="23" height="23" rx="2" fill="#2f7240"/><text x="10" y="36" font-size="18" font-weight="700" fill="#fff">X</text></svg></a>
    <a href="#" class="run" aria-label="Word"><svg viewBox="0 0 60 60"><rect width="60" height="60" rx="14" fill="#fff"/><path d="M16 10h34v10H16z" fill="#61a6ec"/><path d="M16 20h34v10H16z" fill="#4279d0"/><path d="M16 30h34v10H16z" fill="#2a56b4"/><path d="M16 39h34v10H16z" fill="#1f3f87"/><rect x="5" y="18" width="23" height="23" rx="2" fill="#2650ae"/><text x="7" y="36" font-size="17" font-weight="700" fill="#fff">W</text></svg></a>
    <i class="dsep"></i>
    <a href="#" aria-label="Trash"><svg viewBox="0 0 60 60"><defs><linearGradient id="tr"><stop offset="0" stop-color="#5c6063"/><stop offset=".4" stop-color="#a0a3a5"/><stop offset="1" stop-color="#55585b"/></linearGradient></defs><path d="M5 5l8-9 8 3 6-5 9 6 7-6 6 6 6 5v5H5z" fill="#e3e3e0"/><path d="M14 3l5-5 4 7M30 5l5-7 6 8" fill="none" stroke="#6d7f94" stroke-width="2"/><path d="M4 3c8 7 44 7 52 0l-6 54c-1 8-39 8-40 0z" fill="url(#tr)"/></svg></a>
  </nav>
</main>
</body>
</html>
```
FILE: styles.css
```css
* { box-sizing: border-box; }
html, body { margin: 0; height: 100%; }
body {
  font-family: Inter, "Liberation Sans", sans-serif;
  color: #fff;
  display: flex;
  flex-direction: column;
  overflow: hidden;
  background: radial-gradient(ellipse 620px 300px at 81% 99%, #343b5c, #252b4d 40%, transparent), linear-gradient(90deg, #0b0b33, #070628 60%, #0c0b38);
}
a { color: inherit; text-decoration: none; }
button { font: inherit; color: inherit; background: none; border: 0; padding: 0; margin: 0; display: flex; align-items: center; justify-content: center; }
svg { display: block; flex: none; overflow: visible; }
i { font-style: normal; }
.defs { position: absolute; width: 0; height: 0; }

/* menu bar */
.menubar { flex: none; height: 72px; display: flex; align-items: center; justify-content: space-between; padding: 0 34px 2px 40px; font-size: 25px; font-weight: 500; background: linear-gradient(90deg, #15173c, #0a0930 60%, #06062a); }
.menus { display: flex; align-items: center; gap: 42px; }
.menus .app { font-weight: 700; }
.apple { width: 27px; height: 33px; }
.extras { display: flex; align-items: center; gap: 38px; }
.battery { display: flex; align-items: center; gap: 10px; font-size: 22px; }
.clock { display: flex; gap: 16px; font-size: 26px; }

/* desktop and background windows */
.desktop { flex: 1; position: relative; }
.purple-window { position: absolute; top: 2px; left: 60px; right: 0; height: 300px; border-radius: 20px; background: #522b97; border-top: 2px solid #7c5cba; }
.canva { position: absolute; z-index: 0; top: 50px; left: 0; right: 0; bottom: 109px; display: flex; flex-direction: column; background: #0d1214; border: 2px solid #3a3f42; border-left-width: 1px; border-right-width: 1px; border-radius: 20px; overflow: hidden; box-shadow: 0 4px 40px rgba(0,0,0,.7); }
.canva-top { flex: none; height: 240px; background: #29343a; display: flex; flex-direction: column; align-items: flex-end; gap: 12px; padding-top: 10px; }
.pill { width: 90px; height: 56px; border-radius: 20px; background: #3f4c54; margin-right: 10px; }
.panel { width: 90px; flex: 1; border-radius: 12px; background: radial-gradient(ellipse 62px 32px at 30% 28%, #29343a 98%, transparent), #3d4951; }
.canva-page { flex: 1; margin-left: 18px; background: #fbfbfb; border-radius: 0 0 18px 18px; display: flex; justify-content: flex-end; align-items: flex-end; padding: 0 7px 7px; position: relative; z-index: 1; }
.scroll { width: 16px; height: 764px; border-radius: 8px; background: #c2c2c2; }
.canva-foot { flex: none; height: 46px; color: #5a5d5f; font-size: 28px; font-weight: 500; }
.foot-row { height: 60px; margin-top: -19px; display: flex; align-items: center; justify-content: flex-end; padding-right: 27px; gap: 46px; }
.track { width: 398px; height: 8px; border-radius: 4px; background: #1d2123; display: flex; align-items: center; justify-content: center; margin-right: 8px; }
.track i { width: 40px; height: 40px; border-radius: 50%; background: #55585a; }
.bar { width: 3px; height: 30px; background: #1d2123; margin-right: -28px; }
.pages { width: 160px; height: 60px; gap: 14px; border-radius: 16px; background: #181d20; }
.count { margin: 0 6px 0 -10px; }
.help { width: 40px; height: 40px; margin-left: 14px; border: 3px solid; border-radius: 50%; font-size: 24px; display: flex; align-items: center; justify-content: center; }
.under { position: absolute; left: 40px; right: 32px; top: 1438px; bottom: 250px; background: #080826; }

/* excel window */
.excel { position: absolute; top: 2px; left: 0; right: 36px; bottom: 254px; display: flex; flex-direction: column; background: #292929; border-radius: 18px 18px 20px 20px; overflow: hidden; box-shadow: 0 0 0 1px #000; }
.excel::after { content: ""; position: absolute; inset: 0; border: 2px solid rgba(190,190,190,.4); border-radius: inherit; pointer-events: none; }
.desktop::before { content: ""; position: absolute; z-index: 1; top: 2px; left: 0; right: 36px; bottom: 254px; border-radius: 20px; box-shadow: 0 40px 76px rgba(0,0,0,.66); }
.excel, .dock, .under { z-index: 2; }
.ch { color: #fff; }
.dim, .dim .ch { color: #777; }
.dim .ch.lit { color: #fff; }

.titlebar { flex: none; height: 62px; display: flex; align-items: center; padding: 2px 24px 0 26px; }
.lights { display: flex; gap: 16px; }
.lights i { width: 24px; height: 24px; border-radius: 50%; background: #ed6a5e; }
.lights i:nth-child(2) { background: #f4bd4f; }
.lights i:nth-child(3) { background: #61c554; }
.autosave { margin-left: 52px; display: flex; align-items: center; gap: 19px; font-size: 22px; font-weight: 500; color: #dcdcdc; }
.autosave input { appearance: none; margin: 0; width: 56px; height: 28px; border-radius: 14px; background: radial-gradient(circle at 42px 14px, #fff 12px, transparent 13px), #c9c9c9; }
.quick { display: flex; align-items: center; gap: 24px; margin-left: 25px; }
.quick .ch { margin: 0 -6px 0 -9px; }
.doc { margin: 0 0 0 570px; display: flex; align-items: center; gap: 11px; font-size: 23px; font-weight: 600; }
.doc em { font-style: normal; font-weight: 500; margin: 0 -3px; color: #b0b0b0; }
.doc .ch { color: #b0b0b0; }
.tb-right { margin-left: auto; display: flex; gap: 38px; align-items: center; }

.tabs { flex: none; height: 62px; display: flex; align-items: center; padding: 6px 20px 0 22px; font-size: 26px; font-weight: 500; color: #dfdfdf; }
.tabs nav { flex: 1; display: flex; gap: 49px; height: 52px; }
.tabs a { line-height: 47px; }
.tabs a.on { font-weight: 700; border-bottom: 6px solid #e2e2e4; border-radius: 3px; }
.tabs button { height: 48px; border-radius: 12px; color: #fff; gap: 10px; font-size: 25px; }
.comments { width: 210px; background: #535353; margin-right: 20px; }
.share { width: 178px; background: #3c8744; }
.share .ch { margin-left: 8px; }

.ribbon { flex: none; height: 150px; padding: 8px 0 16px; display: flex; border-bottom: 2px solid #000; font-size: 21px; font-weight: 500; }
.group { display: flex; border-right: 2px solid #4c4c4c; flex: none; }
.group:last-child { border-right: 0; }
.row { display: grid; height: 48px; align-items: center; justify-items: center; }
.big { display: block; align-self: start; line-height: 24px; padding-top: 10px; text-align: center; }
.big span { height: 60px; margin-bottom: 8px; display: flex; align-items: center; justify-content: center; gap: 12px; }
.big.dim, .dim .big { color: #8f8f8f; }
.small3 { display: grid; grid-template-columns: 36px 32px; grid-template-rows: 44px 44px 44px; align-items: center; justify-items: center; height: 124px; }
.vs { width: 2px; height: 36px; background: #4c4c4c; }
.sel { width: 48px; height: 48px; border-radius: 8px; background: #4b4b4b; }
.combo { width: 282px; height: 48px; justify-content: space-between; padding: 0 8px 0 12px; background: #323232; border: 1px solid #424242; border-bottom: 2px solid #555; border-radius: 8px; font-size: 24px; font-weight: 400; }

.clip { width: 211px; padding-left: 12px; }
.clip .big { width: 112px; }
.clip .big span { gap: 9px; justify-content: flex-end; padding-right: 2px; }
.font { width: 540px; padding-left: 19px; }
.font, .align, .wrap, .number { flex-direction: column; gap: 16px; padding-top: 10px; }
.font .r1 { grid-template-columns: 282px 111px 60px 48px; }
.font .size { width: 107px; justify-self: end; }
.font .r2 { grid-template-columns: 48px 56px 46px 28px 30px 50px 24px 34px 48px 24px 56px 16px; font-size: 26px; font-weight: 400; color: #ddd; }
.it { font-family: "Liberation Serif", serif; font-style: italic; font-size: 28px; }
.un { text-decoration: underline; text-underline-offset: 5px; }
.align { width: 324px; padding-left: 20px; }
.align .row { grid-template-columns: 46px 58px 46px 36px 46px 26px; color: #ddd; }
.align .r2 { grid-template-columns: 46px 58px 46px 36px 46px 58px; }
.wrap { width: 110px; padding-left: 20px; }
.wrap .row { grid-template-columns: 36px 38px; }
.number { width: 352px; padding-left: 19px; }
.number .combo { width: 310px; color: #9a9a9a; }
.number .row { grid-template-columns: 48px 24px 56px 50px 30px 50px 54px; }
.styles { width: 366px; padding-left: 19px; display: grid; grid-template-columns: 120px 108px 92px; }
.cells { width: 194px; padding-left: 24px; flex-direction: column; }
.cells button { flex: none; height: 44px; gap: 12px; justify-content: flex-start; }
.edit { width: 310px; padding-left: 19px; display: grid; grid-template-columns: 70px 96px 102px; }
.edit .small3 { grid-template-columns: 40px 30px; }
.addins { width: 128px; justify-content: center; }
.ai { padding-left: 15px; display: grid; grid-template-columns: 96px 80px; }

.message { flex: none; height: 62px; display: flex; align-items: center; padding: 0 16px 0 18px; background: linear-gradient(#fef6e0, #f8f0db); border-bottom: 2px solid #c9c2b0; color: #262626; font-size: 24px; }
.message strong { font-weight: 500; margin: 0 18px; }
.message button { margin-left: auto; width: 316px; height: 36px; border: 2px solid #aaa391; border-radius: 10px; }

.formula { flex: none; height: 58px; display: flex; align-items: center; background: #262626; border-bottom: 6px double #ddd; }
.namebox { width: 170px; height: 50px; display: flex; align-items: center; border: 2px solid #444; padding-right: 1px; }
.formula input { font: inherit; color: #e6e6e6; border: 0; background: none; outline: 0; min-width: 0; }
.namebox input { width: 150px; padding: 0 0 0 17px; font-size: 23px; }
.formula button { width: 60px; margin-right: -2px; }
.namebox + button { margin-left: 12px; }
.formula .fx { font: italic 34px "Liberation Serif", serif; color: #999; width: 60px; margin-right: 5px; }
.formula .fin { flex: 1; height: 40px; background: #393939; border: 1px solid #4a4a4a; border-radius: 4px; }
.formula .expand { width: 46px; height: 36px; margin: 0 2px; background: #1f1f1f; }

/* grid */
.sheet { flex: 1; min-height: 0; position: relative; overflow: hidden; background: #fff; color: #000; }
table { width: 100%; table-layout: fixed; border-collapse: separate; border-spacing: 0; font: 16px/18px "Liberation Serif", "Times New Roman", serif; }
.w30 { width: 30px; } .w96 { width: 96px; } .w134 { width: 134px; } .w352 { width: 352px; } .w142 { width: 142px; }
.w141 { width: 141px; } .w143 { width: 143px; } .w122 { width: 122px; } .w78 { width: 78px; }
th { padding: 0; background: #181818; color: #fff; font: 700 14px/18px "Open Sans", sans-serif; border-right: 2px solid #5a5a5a; }
thead th { height: 31px; border-bottom: 3px solid #c4c4c4; }
.corner { background: linear-gradient(135deg, transparent 60%, #777 61%) 6px 6px / 18px 18px no-repeat #181818; }
tbody th { border-right: 2px solid #cfcfcf; border-bottom: 2px solid #555; }
tr { height: 22px; }
td { padding: 0 2px; white-space: nowrap; border-right: 2px solid #d3d3d3; border-bottom: 2px solid #d3d3d3; }
.rest { border-right: 0; background: repeating-linear-gradient(90deg, transparent 0 76px, #d3d3d3 76px 78px); }
.sliver { height: 4px; font-size: 0; line-height: 0; }
.sliver th { font-size: 0; line-height: 0; }
.head { height: 42px; }
.head td:nth-child(2) { font-size: 30px; line-height: 30px; text-align: center; padding-top: 4px; }
.head th { padding-top: 14px; }
.seven { height: 25px; }
.c { text-align: center; }
.r { text-align: right; }
.in { padding-left: 8px; }
.bi { font-weight: 700; font-style: italic; }
.seven td:nth-child(-n+8) { border-bottom: 6px double #000; }
.ledger td { border-color: #000; }
.ledger td:nth-last-child(2), .ledger .rest { border-color: #d3d3d3; }
.ledger td.g { border-right: 6px double #000; }
.ledger th { border-right-color: #000; }
td.note { color: #4167b7; font-weight: 700; font-style: italic; overflow: hidden; }

.textbox { position: absolute; left: 794px; top: 241px; width: 269px; height: 904px; padding-right: 10px; background: #fff; border: 2px solid #6b6b6b; box-shadow: 0 -6px 0 -1px #fff; display: flex; align-items: center; justify-content: center; }
.textbox span { writing-mode: vertical-rl; font: 700 100px/120px Roboto, sans-serif; color: #e93323; }
.h { position: absolute; width: 15px; height: 15px; background: #fff; border: 1px solid #888; box-shadow: 0 1px 2px rgba(0,0,0,.4); }
.tl, .tc, .tr { top: -8px; }
.tl, .ml { left: -8px; }
.tr, .mr { right: -8px; }
.tc { left: 126px; }
.ml, .mr { top: 442px; }
.rotate { position: absolute; left: 278px; top: 436px; }

/* sheet tabs */
.sheets { flex: none; height: 52px; display: grid; grid-template-columns: 121px 225px 230px 201px 186px 180px 190px 170px 228px 268px 226px 245px 255px 42px 76px 1fr; background: linear-gradient(90deg, #303030 120px, #212121 120px, #212121 2700px, #303030 2750px); border-top: 2px solid #6a6a6a; border-bottom: 1px solid #000; font-size: 23px; color: #808080; }
.sheets > * { height: 42px; padding-top: 5px; border-right: 2px solid #5e5e5e; }
.sheets .on { background: #fff; color: #3b7c4b; font-weight: 600; border-radius: 0 0 6px 6px; border: 0; }
.sheets .arrows { display: flex; align-items: center; padding-left: 29px; }

/* status bar */
.status { flex: none; height: 46px; display: flex; align-items: center; padding-left: 49px; background: linear-gradient(#4b4b4b, #3e3e3e); font-size: 24px; }
.ready { margin-right: 38px; }
.status > svg { margin-right: 8px; }
.views { margin-left: auto; display: flex; height: 46px; }
.views button { width: 72px; height: 46px; }
.views .on { background: #636363; }
.zoom { display: flex; align-items: center; gap: 12px; margin-left: 15px; width: 262px; }
.zoom input { appearance: none; flex: 1; min-width: 0; margin: 0; height: 8px; border-radius: 4px; background: radial-gradient(circle at 100px 4px, #444 3px, transparent 4px), #7b7b7b; }
.zoom input::-webkit-slider-thumb { appearance: none; width: 32px; height: 32px; border-radius: 50%; background: #a3a3a3; }
.zp { width: 105px; margin-left: 40px; font-size: 23px; }

/* dock */
.dock { position: absolute; bottom: 10px; left: 50%; margin-left: -666px; height: 96px; display: flex; gap: 18px; padding: 13px; border: 2px solid #3d3c5c; border-radius: 28px; background: rgba(30,29,60,.85); }
.dock a { position: relative; width: 60px; height: 60px; }
.dock svg { width: 60px; height: 60px; }
.dock .run::after { content: ""; position: absolute; left: 26px; top: 69px; width: 8px; height: 8px; border-radius: 50%; background: #9c9cbd; }
.dsep { width: 2px; height: 72px; margin: -2px 8px; background: #5a5a7c; }
.dock .zoomapp, .dock .canvaapp { border-radius: 14px; font-size: 17px; font-weight: 600; line-height: 58px; text-align: center; background: linear-gradient(200deg, #3e73ec, #2456ec 50%, #1d46c0); }
.dock .canvaapp { background: linear-gradient(165deg, #4fc4cb 20%, #4a79dc 55%, #5b2bea 80%, #7a2be0); font: italic 700 20px/58px "Liberation Serif", serif; }
.badge { position: absolute; right: -10px; top: -8px; width: 28px; height: 28px; border-radius: 50%; background: #e04b3e; font-size: 18px; font-weight: 400; line-height: 28px; text-align: center; }
```
